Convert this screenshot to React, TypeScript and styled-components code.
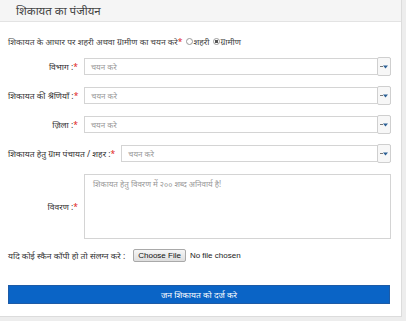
import styled, { createGlobalStyle } from "styled-components";

const GlobalStyle = createGlobalStyle`
  html, body {
    margin: 0;
    padding: 0;
    background: #ededed;
  }
  body {
    font-family: "Noto Sans", "Liberation Sans", sans-serif;
    color: #333;
  }
  * {
    box-sizing: border-box;
  }
`;

const Panel = styled.div`
  width: 402px;
  height: 317px;
  background: #fff;
  border-right: 1px solid #dcdcdc;
  border-bottom: 1px solid #dcdcdc;
  display: flex;
  flex-direction: column;
`;

const Heading = styled.div`
  height: 22px;
  background: #f5f5f5;
  border-bottom: 1px solid #e3e3e3;
  padding-left: 16px;
  display: flex;
  align-items: center;
  font-size: 11.5px;
  color: #444;
`;

const Body = styled.div`
  padding: 12px 10px 0 8px;
  display: flex;
  flex-direction: column;
`;

const RadioLine = styled.div`
  font-size: 8.5px;
  color: #444;
  display: flex;
  align-items: center;
  height: 14px;
  margin-bottom: 10px;
`;

const Req = styled.span`
  color: #e02020;
`;

const Radio = styled.span<{ checked?: boolean }>`
  display: inline-block;
  width: 7px;
  height: 7px;
  border-radius: 50%;
  border: 1px solid #999;
  margin: 0 1px 0 3px;
  background: ${(p) => (p.checked ? "radial-gradient(circle, #555 40%, #fff 55%)" : "#fff")};
`;

const Row = styled.div<{ gap?: number }>`
  display: flex;
  align-items: center;
  margin-bottom: ${(p) => p.gap ?? 12}px;
`;

const Label = styled.div`
  min-width: 70px;
  text-align: right;
  font-size: 8.5px;
  color: #333;
  flex-shrink: 0;
  margin-right: 6px;
  white-space: nowrap;
`;

const Select = styled.div`
  flex: 1;
  height: 17px;
  border: 1px solid #d4d4d4;
  display: flex;
  align-items: center;
  font-size: 8px;
  color: #999;
  padding-left: 6px;
`;

const Placeholder = styled.span`
  flex: 1;
`;

const Arrow = styled.div`
  width: 14px;
  height: 19px;
  margin-right: -1px;
  border: 1px solid #cfcfcf;
  border-radius: 2px;
  background: #f7f7f7;
  display: flex;
  align-items: center;
  justify-content: center;
`;

const TextArea = styled.div`
  flex: 1;
  height: 65px;
  border: 1px solid #d4d4d4;
  font-size: 8px;
  color: #999;
  padding: 3px 8px;
`;

const FileRow = styled.div`
  display: flex;
  align-items: center;
  font-size: 8.5px;
  color: #333;
  margin-top: 10px;
`;

const FileButton = styled.span`
  font-family: "Liberation Sans", Arial, sans-serif;
  font-size: 8px;
  line-height: 11px;
  color: #111;
  border: 1px solid #a9a9a9;
  border-radius: 2px;
  background: linear-gradient(#f6f6f6, #dedede);
  padding: 0 4px;
  margin-left: 8px;
  margin-right: 4px;
`;

const FileText = styled.span`
  font-family: "Liberation Sans", Arial, sans-serif;
  font-size: 8px;
  color: #222;
`;

const Submit = styled.div`
  margin-top: 23px;
  margin-right: 1px;
  height: 19px;
  background: #0a64c6;
  border: 1px solid #1d5ba6;
  color: #fff;
  font-size: 8.5px;
  display: flex;
  align-items: center;
  justify-content: center;
`;

const ArrowIcon = () => (
  <Arrow>
    <svg width="8" height="4" viewBox="0 0 8 4">
      <path d="M0 1.5 H3" stroke="#777" strokeWidth="1" />
      <path d="M3 0.5 H8 L5.5 3.5 Z" fill="#2a5f94" />
    </svg>
  </Arrow>
);

const fields = [
  "विभाग :",
  "शिकायत की श्रेणियाँ :",
  "ज़िला :",
  "शिकायत हेतु ग्राम पंचायत / शहर :",
];

export default function App() {
  return (
    <>
      <GlobalStyle />
      <Panel>
        <Heading>शिकायत का पंजीयन</Heading>
        <Body>
          <RadioLine>
            शिकायत के आधार पर शहरी अथवा ग्रामीण का चयन करे<Req>*</Req>
            <Radio />
            शहरी
            <Radio checked />
            ग्रामीण
          </RadioLine>
          {fields.map((f) => (
            <Row key={f}>
              <Label>
                {f}
                <Req>*</Req>
              </Label>
              <Select>
                <Placeholder>चयन करे</Placeholder>
                <ArrowIcon />
              </Select>
            </Row>
          ))}
          <Row gap={0}>
            <Label>
              विवरण :<Req>*</Req>
            </Label>
            <TextArea>शिकायत हेतु विवरण में २०० शब्द अनिवार्य है!</TextArea>
          </Row>
          <FileRow>
            यदि कोई स्कैन कॉपी हो तो संलग्न करे :
            <FileButton>Choose File</FileButton>
            <FileText>No file chosen</FileText>
          </FileRow>
          <Submit>जन शिकायत को दर्ज करे</Submit>
        </Body>
      </Panel>
    </>
  );
}
